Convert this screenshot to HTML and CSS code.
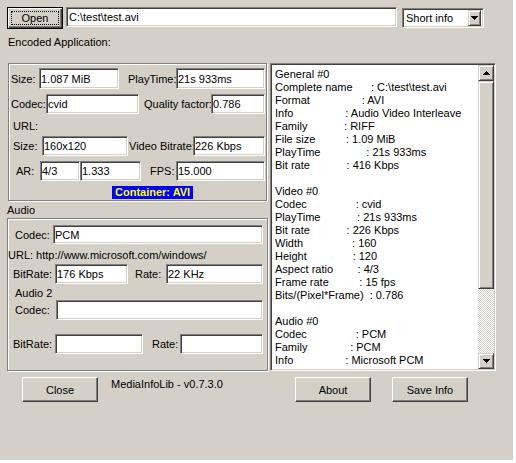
FILE: index.html
```html
<!DOCTYPE html>
<html lang="en">
<head>
    <meta charset="UTF-8">
    <meta name="viewport" content="width=device-width, initial-scale=1.0">
    <title>MediaInfo</title>
    <link rel="stylesheet" href="styles.css">
</head>
<body>
    <div class="window">
        <div class="toolbar">
            <button class="btn btn-open">Open</button>
            <input type="text" class="field path" value="C:\test\test.avi" readonly>
            <div class="field combo">
                <span class="combo-text">Short info</span>
                <span class="arrow-btn combo-btn">
                    <svg width="7" height="4" viewBox="0 0 7 4"><path d="M0 0h7v1h-7zM1 1h5v1h-5zM2 2h3v1h-3zM3 3h1v1h-1z" fill="#000"/></svg>
                </span>
            </div>
        </div>

        <div class="encoded">Encoded Application:</div>

        <div class="main">
            <div class="left">
                <div class="group video">
                    <div class="row row-1">
                        <span class="lbl pl2">Size:</span>
                        <input type="text" class="field" value="1.087 MiB" readonly>
                        <span class="lbl pl9">PlayTime:</span>
                        <input type="text" class="field" value="21s 933ms" readonly>
                    </div>
                    <div class="row row-2">
                        <span class="lbl pl2">Codec:</span>
                        <input type="text" class="field" value="cvid" readonly>
                        <span class="lbl pl5">Quality factor:</span>
                        <input type="text" class="field" value="0.786" readonly>
                    </div>
                    <div class="line url-video">URL:</div>
                    <div class="row row-3">
                        <span class="lbl pl4">Size:</span>
                        <input type="text" class="field" value="160x120" readonly>
                        <span class="lbl pl1">Video Bitrate:</span>
                        <input type="text" class="field" value="226 Kbps" readonly>
                    </div>
                    <div class="row row-4">
                        <span class="lbl pl7">AR:</span>
                        <input type="text" class="field" value="4/3" readonly>
                        <input type="text" class="field" value="1.333" readonly>
                        <span class="lbl pl9">FPS:</span>
                        <input type="text" class="field" value="15.000" readonly>
                    </div>
                    <div class="container-row"><span class="container-tag">Container: AVI</span></div>
                </div>

                <div class="audio-title">Audio</div>
                <div class="group audio">
                    <div class="row row-a1">
                        <span class="lbl pl7">Codec:</span>
                        <input type="text" class="field" value="PCM" readonly>
                    </div>
                    <div class="line url-audio">URL: http://www.microsoft.com/windows/</div>
                    <div class="row row-a2">
                        <span class="lbl pl5">BitRate:</span>
                        <input type="text" class="field" value="176 Kbps" readonly>
                        <span class="lbl pl7">Rate:</span>
                        <input type="text" class="field" value="22 KHz" readonly>
                    </div>
                    <div class="line audio2">Audio 2</div>
                    <div class="row row-a3">
                        <span class="lbl pl7">Codec:</span>
                        <input type="text" class="field" value="" readonly>
                    </div>
                    <div class="row row-a4">
                        <span class="lbl pl5">BitRate:</span>
                        <input type="text" class="field" value="" readonly>
                        <span class="lbl pl9">Rate:</span>
                        <input type="text" class="field" value="" readonly>
                    </div>
                </div>
            </div>

            <div class="memo">
<pre class="memo-text">General #0
Complete name      : C:\test\test.avi
Format                 : AVI
Info                 : Audio Video Interleave
Family            : RIFF
File size          : 1.09 MiB
PlayTime               : 21s 933ms
Bit rate            : 416 Kbps

Video #0
Codec                : cvid
PlayTime            : 21s 933ms
Bit rate            : 226 Kbps
Width                : 160
Height               : 120
Aspect ratio        : 4/3
Frame rate          : 15 fps
Bits/(Pixel*Frame)  : 0.786

Audio #0
Codec                : PCM
Family              : PCM
Info                 : Microsoft PCM</pre>
                <div class="scrollbar">
                    <span class="arrow-btn sb-btn">
                        <svg width="7" height="4" viewBox="0 0 7 4"><path d="M3 0h1v1h-1zM2 1h3v1h-3zM1 2h5v1h-5zM0 3h7v1h-7z" fill="#000"/></svg>
                    </span>
                    <span class="arrow-btn sb-thumb"></span>
                    <span class="sb-track"></span>
                    <span class="arrow-btn sb-btn">
                        <svg width="7" height="4" viewBox="0 0 7 4"><path d="M0 0h7v1h-7zM1 1h5v1h-5zM2 2h3v1h-3zM3 3h1v1h-1z" fill="#000"/></svg>
                    </span>
                </div>
            </div>
        </div>

        <div class="actions">
            <button class="btn btn-close">Close</button>
            <div class="version">MediaInfoLib - v0.7.3.0</div>
            <button class="btn btn-about">About</button>
            <button class="btn btn-save">Save Info</button>
        </div>
    </div>
</body>
</html>
```

FILE: styles.css
```css
body {
    margin: 0;
    background: #fff;
    font-family: "Liberation Sans", Arial, sans-serif;
    font-size: 11px;
    color: #000;
}

.window {
    width: 513px;
    height: 460px;
    background: #d4d0c8;
    overflow: hidden;
}

/* 3d borders */
.field {
    box-sizing: border-box;
    margin: 0;
    padding: 0 1px;
    border: 1px solid;
    border-color: #808080 #fff #fff #808080;
    box-shadow: inset 1px 1px 0 #404040, inset -1px -1px 0 #d4d0c8;
    background: #fff;
    font-family: inherit;
    font-size: 11px;
    color: #000;
    outline: none;
    height: 100%;
    min-width: 0;
    width: 100%;
}

.btn {
    box-sizing: border-box;
    margin: 0;
    padding: 0;
    border: 1px solid;
    border-color: #fff #404040 #404040 #fff;
    box-shadow: inset -1px -1px 0 #808080, inset 1px 1px 0 #d4d0c8;
    background: #d4d0c8;
    font-family: inherit;
    font-size: 11px;
    color: #000;
}

.arrow-btn {
    box-sizing: border-box;
    display: flex;
    align-items: center;
    justify-content: center;
    border: 1px solid;
    border-color: #d4d0c8 #404040 #404040 #d4d0c8;
    box-shadow: inset 1px 1px 0 #fff, inset -1px -1px 0 #808080;
    background: #d4d0c8;
}

.group {
    box-sizing: border-box;
    border: 1px solid #808080;
    box-shadow: inset 1px 1px 0 #fff, 1px 1px 0 #fff;
}

/* top bar */
.toolbar {
    display: flex;
    align-items: flex-start;
    padding: 7px 0 0 7px;
    height: 22px;
}

.btn-open {
    width: 56px;
    height: 22px;
    border-color: #000;
    box-shadow: inset 1px 1px 0 #fff, inset -1px -1px 0 #404040, inset -2px -2px 0 #808080;
    outline: 1px dotted #000;
    outline-offset: -5px;
}

.path {
    margin-left: 3px;
    width: 331px;
    height: 20px;
    padding-left: 2px;
}

.combo {
    display: flex;
    align-items: center;
    margin-left: 5px;
    margin-top: 1px;
    width: 82px;
    height: 20px;
    padding: 2px;
}

.combo-text {
    flex: 1;
    padding-left: 1px;
}

.combo-btn {
    width: 13px;
    height: 16px;
}

.encoded {
    margin: 7px 0 0 8px;
    height: 13px;
    line-height: 13px;
}

/* main area */
.main {
    display: flex;
    margin-top: 14px;
}

.left {
    width: 263px;
    margin-left: 7px;
}

.video {
    margin-left: 1px;
    width: 259px;
    height: 138px;
}

.row {
    display: grid;
    align-items: center;
}

.lbl {
    white-space: nowrap;
    align-self: center;
}

.pl1 { padding-left: 1px; }
.pl2 { padding-left: 2px; }
.pl4 { padding-left: 4px; }
.pl5 { padding-left: 5px; }
.pl7 { padding-left: 7px; }
.pl9 { padding-left: 9px; }

.line {
    height: 13px;
    line-height: 13px;
    white-space: nowrap;
}

.row-1 {
    margin-top: 4px;
    height: 21px;
    grid-template-columns: 30px 80px 57px 89px;
}

.row-2 {
    margin-top: 5px;
    height: 20px;
    grid-template-columns: 37px 93px 72px 54px;
}

.url-video {
    margin-top: 6px;
    padding-left: 4px;
}

.row-3 {
    margin-top: 3px;
    height: 20px;
    grid-template-columns: 33px 86px 65px 72px;
}

.row-4 {
    margin-top: 5px;
    height: 20px;
    grid-template-columns: 31px 40px 61px 35px 89px;
}

.container-row {
    margin-top: 5px;
    padding-left: 103px;
    height: 13px;
}

.container-tag {
    display: inline-block;
    height: 13px;
    line-height: 13px;
    padding: 0 3px;
    background: #0000ff;
    color: #ffff00;
    font-weight: bold;
}

.audio-title {
    margin-top: 3px;
    height: 14px;
    line-height: 13px;
}

.audio {
    width: 261px;
    height: 153px;
}

.row-a1 {
    margin-top: 6px;
    height: 19px;
    grid-template-columns: 45px 210px;
}

.url-audio {
    margin-top: 5px;
}

.row-a2 {
    margin-top: 2px;
    height: 20px;
    grid-template-columns: 47px 73px 38px 97px;
}

.audio2 {
    margin-top: 3px;
    padding-left: 7px;
}

.row-a3 {
    height: 20px;
    grid-template-columns: 48px 207px;
}

.row-a4 {
    margin-top: 14px;
    height: 20px;
    grid-template-columns: 47px 88px 37px 83px;
}

/* info memo */
.memo {
    box-sizing: border-box;
    display: flex;
    width: 226px;
    height: 308px;
    border: 1px solid;
    border-color: #808080 #fff #fff #808080;
    box-shadow: inset 1px 1px 0 #404040, inset -1px -1px 0 #d4d0c8;
    padding: 1px;
    background: #fff;
}

.memo-text {
    flex: 1;
    margin: 0;
    padding: 3px 0 0 3px;
    font-family: inherit;
    font-size: 11px;
    line-height: 13px;
    white-space: pre;
    overflow: hidden;
}

.scrollbar {
    display: flex;
    flex-direction: column;
    width: 16px;
}

.sb-btn {
    height: 16px;
    flex: none;
}

.sb-thumb {
    height: 208px;
    flex: none;
}

.sb-track {
    flex: 1;
    background: repeating-conic-gradient(#d4d0c8 0 25%, #fff 0 50%) 0 0 / 2px 2px;
}

/* bottom buttons */
.actions {
    display: flex;
    align-items: flex-start;
    margin-top: 6px;
}

.actions .btn {
    width: 76px;
    height: 25px;
}

.btn-close {
    margin-left: 22px;
}

.version {
    margin: 1px 0 0 13px;
    width: 184px;
    line-height: 13px;
}

.btn-save {
    margin-left: 21px;
}
```
